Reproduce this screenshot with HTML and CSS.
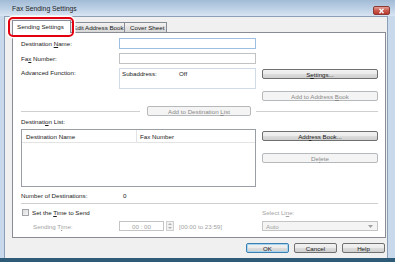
FILE: index.html
```html
<!DOCTYPE html>
<html lang="en">
<head>
  <meta charset="UTF-8">
  <meta name="viewport" content="width=device-width, initial-scale=1.0">
  <title>Fax Sending Settings</title>
  <link rel="stylesheet" href="styles.css">
</head>
<body>
  <div class="window">
    <div class="titlebar">
      <span class="title">Fax Sending Settings</span>
      <span class="close">
        <svg width="15" height="6" viewBox="0 0 15 6"><path d="M5.5 0.8 L9.5 5.2 M9.5 0.8 L5.5 5.2" stroke="#f4f4f4" stroke-width="1.5"/></svg>
      </span>
    </div>

    <div class="client">
      <!-- Tabs -->
      <div class="tabs">
        <div class="tab active">Sending Settings</div>
        <div class="tab">Edit Address Book</div>
        <div class="tab">Cover Sheet</div>
        <div class="callout"></div>
      </div>

      <div class="panel">
        <div class="row r1">
          <span class="lbl">Destination <u>N</u>ame:</span>
          <div class="field focus"></div>
        </div>
        <div class="row r2">
          <span class="lbl">Fa<u>x</u> Number:</span>
          <div class="field"></div>
        </div>
        <div class="row r3">
          <span class="lbl">Advanced Function:</span>
          <div class="advbox">
            <span class="sub">Subaddress:</span><span>Off</span>
          </div>
          <div class="btn side"><span>S<u>e</u>ttings...</span></div>
        </div>
        <div class="row r4">
          <div class="btn side off"><span>Add to Address <u>B</u>ook</span></div>
        </div>
        <div class="row sep-row">
          <div class="line short"></div>
          <div class="btn off mid"><span>Add to Destination <u>L</u>ist</span></div>
          <div class="line"></div>
        </div>
        <div class="row r6">
          <span class="lbl">Destinati<u>o</u>n List:</span>
        </div>
        <div class="row r7">
          <div class="list">
            <div class="list-head">
              <span class="col-name">Destination Name</span>
              <span class="col-fax">Fax Number</span>
            </div>
          </div>
          <div class="side-btns">
            <div class="btn"><span>Add<u>r</u>ess Book...</span></div>
            <div class="btn off"><span>De<u>l</u>ete</span></div>
          </div>
        </div>
        <div class="row r8">
          <span class="lbl">Number of Destinations:</span>
          <span class="count">0</span>
        </div>
        <div class="line full"></div>
        <div class="row r10">
          <span class="check"></span>
          <span class="check-lbl">Set the <u>T</u>ime to Send</span>
          <span class="select-lbl dim">Select Li<u>n</u>e:</span>
        </div>
        <div class="row r11">
          <span class="lbl dim indent">Sending T<u>i</u>me:</span>
          <div class="timebox dim">00 : 00</div>
          <div class="spin">
            <svg width="6" height="8" viewBox="0 0 6 8"><path d="M1 3 L3 1 L5 3 Z M1 5 L3 7 L5 5 Z" fill="#b0b0b0"/></svg>
          </div>
          <span class="range dim">[00:00 to 23:59]</span>
          <div class="dropdown">
            <span class="dim">Auto</span>
            <svg width="5" height="3" viewBox="0 0 5 3"><path d="M0 0 L5 0 L2.5 3 Z" fill="#a0a0a0"/></svg>
          </div>
        </div>
      </div>

      <div class="footer">
        <div class="btn default"><span>OK</span></div>
        <div class="btn"><span>Cancel</span></div>
        <div class="btn"><span>Help</span></div>
      </div>
    </div>
  </div>
</body>
</html>
```

FILE: styles.css
```css
* { box-sizing: border-box; }
body {
  margin: 0;
  font-family: 'Liberation Sans', Arial, sans-serif;
  font-size: 6.2px;
  color: #1a1a1a;
  background: #c8d9ec;
}
u { text-decoration-thickness: 0.5px; text-underline-offset: 1px; }
.window {
  width: 395px;
  height: 262px;
  display: flex;
  flex-direction: column;
  background: #c8d9ec;
  border-bottom: 4px solid #2d5b78;
  overflow: hidden;
}
.titlebar {
  height: 16px;
  display: flex;
  align-items: flex-start;
  padding-left: 12px;
  background: linear-gradient(#a2bbd5, #bdd1e6 55%, #d9e5f2);
}
.title {
  font-size: 6.8px;
  line-height: 8px;
  margin-top: 5px;
  color: #1e1e1e;
}
.close {
  margin-left: auto;
  margin-right: 5px;
  margin-top: 6px;
  width: 17px;
  height: 9px;
  border: 1px solid #8b3a33;
  border-radius: 2px;
  background: linear-gradient(#e3a096, #cc5a4f 50%, #b9372d);
  display: flex;
  align-items: center;
  justify-content: center;
}
.client {
  flex: 1;
  margin: 0 7px 0 4px;
  border: 1px solid #8c9fb5;
  border-bottom: none;
  background: #f0f0f0;
  padding: 0 1px 0 7px;
}

/* tabs */
.tabs {
  position: relative;
  z-index: 2;
  height: 16px;
  margin-bottom: -1px;
  display: flex;
  align-items: flex-end;
}
.tab {
  height: 10px;
  margin-bottom: 1px;
  padding: 0 2px;
  border: 1px solid #898c95;
  border-bottom: none;
  background: linear-gradient(#f3f3f3, #e4e4e4 50%, #d8d8d8);
  line-height: 9px;
  white-space: nowrap;
  overflow: hidden;
}
.tab.active {
  width: 59px;
  height: 13px;
  margin-bottom: 0;
  margin-right: -1px;
  padding: 0 4px;
  background: #fff;
  line-height: 11px;
  position: relative;
  z-index: 1;
}
.tab:nth-child(2) { width: 55px; padding-left: 2px; }
.tab:nth-child(3) { width: 43px; margin-left: -1px; padding-left: 5px; }
.callout {
  position: absolute;
  left: -4px;
  top: 0;
  width: 66px;
  height: 20px;
  border: 2px solid #e3000f;
  border-radius: 5px;
  box-shadow: 0 0 0 1.5px #fff;
  z-index: 3;
}

/* panel */
.panel {
  height: 206px;
  border: 1px solid #898c95;
  background: #fff;
  padding: 5px 7px 0 8px;
}
.row {
  display: flex;
  align-items: center;
}
.lbl {
  width: 98px;
  flex: none;
  white-space: nowrap;
}
.field {
  width: 137px;
  height: 11px;
  border: 1px solid #c2c2c2;
}
.field.focus { border-color: #9cbfe2; }
.r1 { height: 11px; }
.r2 { height: 11px; margin-top: 4px; }
.r3 { align-items: flex-start; margin-top: 4px; }
.r3 .lbl { line-height: 10px; }
.advbox {
  width: 137px;
  height: 21px;
  border: 1px solid #cfdbe7;
  padding: 1px 2px;
  line-height: 8px;
}
.advbox .sub { display: inline-block; width: 57px; }
.btn {
  height: 10px;
  border: 1px solid #707070;
  border-radius: 2px;
  background: linear-gradient(#f2f2f2, #ebebeb 50%, #dddddd 50%, #cfcfcf);
  display: flex;
  align-items: center;
  justify-content: center;
  white-space: nowrap;
}
.btn.off {
  border-color: #b5b9bc;
  background: #f4f4f4;
  color: #8a8a8a;
}
.side { width: 116px; margin-left: 6px; }
.r3 .side { margin-top: 1px; }
.r4 { margin-top: 2px; }
.r4 .side { margin-left: 241px; }
.sep-row { margin-top: 5px; }
.line { flex: 1; height: 1px; background: #cfcfcf; }
.line.short { flex: none; width: 119px; }
.btn.mid { width: 104px; margin: 0 5px 0 7px; }
.r6 { margin-top: 2px; line-height: 8px; }
.r7 { margin-top: 3px; align-items: flex-start; }
.list {
  width: 235px;
  height: 58px;
  border: 1px solid #9a9fa6;
}
.list-head {
  height: 13px;
  border-bottom: 1px solid #e3e3e3;
  display: flex;
  align-items: center;
}
.col-name {
  width: 115px;
  padding-left: 4px;
  height: 100%;
  display: flex;
  align-items: center;
  border-right: 1px solid #e3e3e3;
}
.col-fax { padding-left: 3px; }
.side-btns {
  width: 116px;
  margin-left: 6px;
  padding-top: 2px;
  display: flex;
  flex-direction: column;
  gap: 12px;
}
.r8 { margin-top: 5px; line-height: 8px; }
.count { padding-left: 4px; }
.line.full { flex: none; margin-top: 3px; }
.r10 { margin-top: 4px; height: 8px; }
.check {
  width: 7px;
  height: 7px;
  margin-left: 1px;
  border: 1px solid #a0a4a8;
  background: linear-gradient(135deg, #dcdcdc, #f6f6f6);
}
.check-lbl { margin-left: 3px; }
.select-lbl { margin-left: auto; width: 116px; }
.dim { color: #a3a3a3; }
.r11 { margin-top: 5px; height: 10px; }
.indent { padding-left: 12px; }
.timebox {
  width: 45px;
  height: 10px;
  border: 1px solid #c4c4c4;
  display: flex;
  align-items: center;
  justify-content: center;
}
.spin {
  width: 8px;
  height: 10px;
  margin-left: 2px;
  border: 1px solid #cfcfcf;
  background: #f2f2f2;
  display: flex;
  align-items: center;
  justify-content: center;
}
.range { margin-left: 5px; white-space: nowrap; }
.dropdown {
  margin-left: auto;
  width: 116px;
  height: 10px;
  border: 1px solid #c4c4c4;
  background: #f4f4f4;
  display: flex;
  align-items: center;
  justify-content: space-between;
  padding: 0 4px 0 3px;
}

/* footer buttons */
.footer {
  display: flex;
  justify-content: flex-end;
  gap: 5px;
  margin-top: 5px;
  margin-right: 1px;
}
.footer .btn { width: 43px; }
.btn.default { border-color: #3c7fb1; box-shadow: inset 0 0 0 1px #a8d4f0; }
```
